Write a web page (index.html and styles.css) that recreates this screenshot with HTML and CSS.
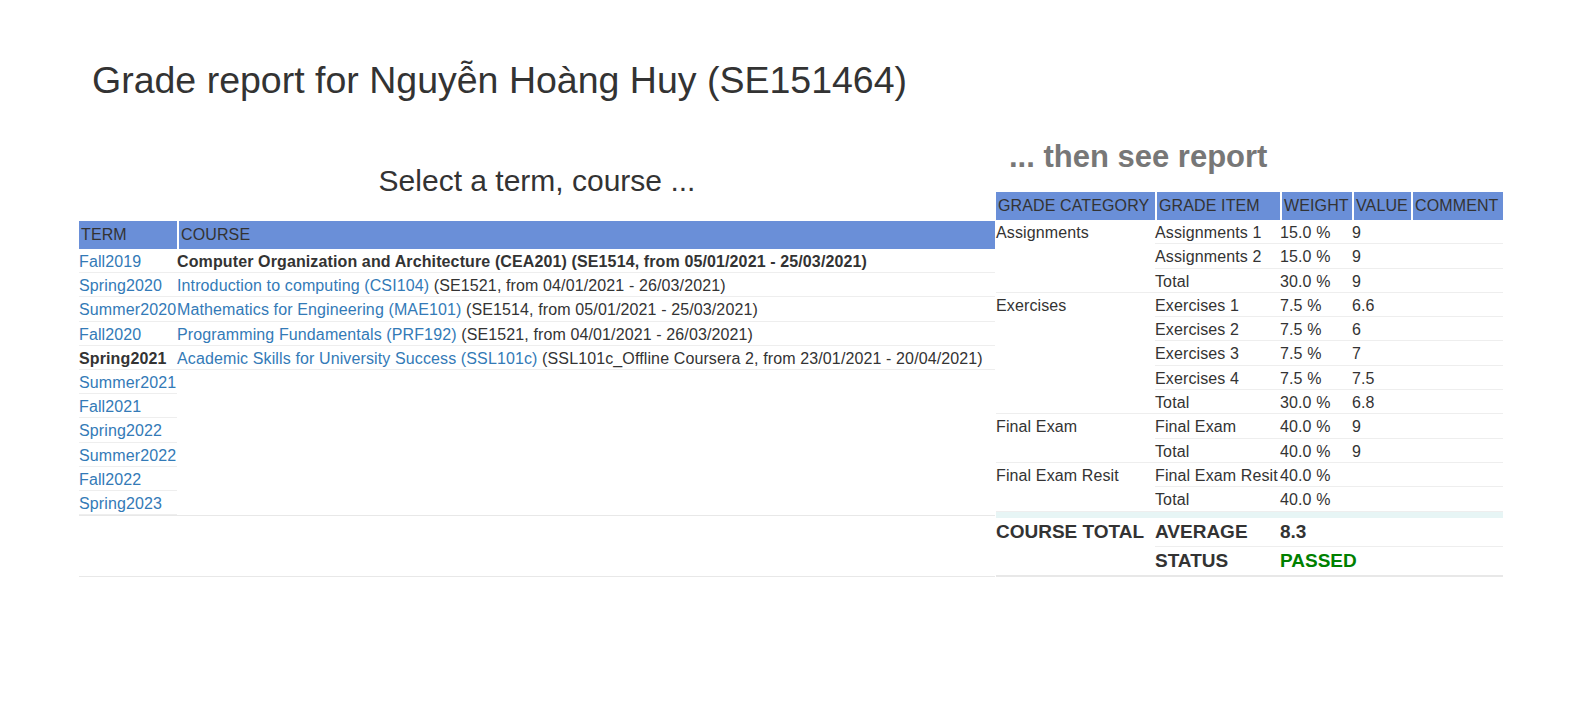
FILE: index.html
```html
<!DOCTYPE html>
<html lang="vi">
<head>
<meta charset="utf-8">
<title>Grade report</title>
<link rel="stylesheet" href="styles.css">
</head>
<body>
<div class="page">
  <h1 class="title">Grade report for Nguyễn Hoàng Huy (SE151464)</h1>
  <div class="panels">
    <section class="pick">
      <h2 class="pick-title">Select a term, course ...</h2>
      <table class="pick-table">
        <colgroup><col class="col-term"><col></colgroup>
        <thead>
          <tr><th>TERM</th><th>COURSE</th></tr>
        </thead>
        <tbody>
          <tr>
            <td class="cell-terms">
              <table class="list">
                <tr><td><a href="#">Fall2019</a></td></tr>
                <tr><td><a href="#">Spring2020</a></td></tr>
                <tr><td><a href="#">Summer2020</a></td></tr>
                <tr><td><a href="#">Fall2020</a></td></tr>
                <tr><td><b>Spring2021</b></td></tr>
                <tr><td><a href="#">Summer2021</a></td></tr>
                <tr><td><a href="#">Fall2021</a></td></tr>
                <tr><td><a href="#">Spring2022</a></td></tr>
                <tr><td><a href="#">Summer2022</a></td></tr>
                <tr><td><a href="#">Fall2022</a></td></tr>
                <tr><td><a href="#">Spring2023</a></td></tr>
              </table>
            </td>
            <td class="cell-courses">
              <table class="list">
                <tr><td><b>Computer Organization and Architecture (CEA201) (SE1514, from 05/01/2021 - 25/03/2021)</b></td></tr>
                <tr><td><a href="#">Introduction to computing (CSI104)</a> (SE1521, from 04/01/2021 - 26/03/2021)</td></tr>
                <tr><td><a href="#">Mathematics for Engineering (MAE101)</a> (SE1514, from 05/01/2021 - 25/03/2021)</td></tr>
                <tr><td><a href="#">Programming Fundamentals (PRF192)</a> (SE1521, from 04/01/2021 - 26/03/2021)</td></tr>
                <tr><td><a href="#">Academic Skills for University Success (SSL101c)</a> (SSL101c_Offline Coursera 2, from 23/01/2021 - 20/04/2021)</td></tr>
              </table>
            </td>
          </tr>
        </tbody>
      </table>
    </section>
    <section class="report">
      <h2 class="report-title">... then see report</h2>
      <table class="grades">
        <colgroup>
          <col class="g1"><col class="g2"><col class="g3"><col class="g4"><col class="g5">
        </colgroup>
        <thead>
          <tr><th>GRADE CATEGORY</th><th>GRADE ITEM</th><th>WEIGHT</th><th>VALUE</th><th>COMMENT</th></tr>
        </thead>
        <tbody>
          <tr><td class="cat" rowspan="3">Assignments</td><td>Assignments 1</td><td>15.0 %</td><td>9</td><td></td></tr>
          <tr><td>Assignments 2</td><td>15.0 %</td><td>9</td><td></td></tr>
          <tr><td>Total</td><td>30.0 %</td><td>9</td><td></td></tr>
          <tr><td class="cat" rowspan="5">Exercises</td><td>Exercises 1</td><td>7.5 %</td><td>6.6</td><td></td></tr>
          <tr><td>Exercises 2</td><td>7.5 %</td><td>6</td><td></td></tr>
          <tr><td>Exercises 3</td><td>7.5 %</td><td>7</td><td></td></tr>
          <tr><td>Exercises 4</td><td>7.5 %</td><td>7.5</td><td></td></tr>
          <tr><td>Total</td><td>30.0 %</td><td>6.8</td><td></td></tr>
          <tr><td class="cat" rowspan="2">Final Exam</td><td>Final Exam</td><td>40.0 %</td><td>9</td><td></td></tr>
          <tr><td>Total</td><td>40.0 %</td><td>9</td><td></td></tr>
          <tr><td class="cat" rowspan="2">Final Exam Resit</td><td>Final Exam Resit</td><td>40.0 %</td><td></td><td></td></tr>
          <tr><td>Total</td><td>40.0 %</td><td></td><td></td></tr>
        </tbody>
        <tfoot>
          <tr class="sep"><td colspan="5"></td></tr>
          <tr class="sum"><td class="cat" rowspan="2">COURSE TOTAL</td><td>AVERAGE</td><td>8.3</td><td></td><td></td></tr>
          <tr class="sum last"><td>STATUS</td><td class="passed">PASSED</td><td></td><td></td></tr>
        </tfoot>
      </table>
    </section>
  </div>
</div>
</body>
</html>
```

FILE: styles.css
```css
* { box-sizing: border-box; }
html, body { margin: 0; padding: 0; background: #fff; }
body {
  font-family: "Liberation Sans", Arial, Helvetica, sans-serif;
  font-size: 16px;
  color: #333;
}
a { color: #337ab7; text-decoration: none; }

.page { padding-left: 79px; }

.title {
  margin: 60px 0 0 13px;
  font-size: 37.5px;
  line-height: 41px;
  font-weight: normal;
  color: #333;
}

.panels { display: flex; align-items: stretch; }

.pick {
  width: 916px;
  margin-right: 1px;
  border-bottom: 1px solid #e8e8e8;
}
.report { width: 507px; }

.pick-title {
  margin: 63px 0 24px;
  font-size: 30px;
  line-height: 33px;
  font-weight: normal;
  text-align: center;
  color: #333;
}
.report-title {
  margin: 39px 0 19px;
  padding-left: 13px;
  font-size: 31px;
  line-height: 33px;
  font-weight: bold;
  color: #777;
}

table { border-collapse: separate; border-spacing: 0; table-layout: fixed; letter-spacing: 0.12px; }

.pick-table, .grades { width: 100%; }
.col-term { width: 98px; }

.pick-table th, .grades th {
  background: #6a8fd8;
  color: #333;
  font-weight: normal;
  text-align: left;
  height: 28px;
  line-height: 28px;
  padding: 0 0 0 2px;
  white-space: nowrap;
}
.pick-table th + th, .grades th + th { border-left: 2px solid #fff; }

.pick-table > tbody > tr > td {
  vertical-align: top;
  padding: 0;
  border-bottom: 1px solid #e8e8e8;
}

.list { width: 100%; table-layout: auto; }
.list td {
  padding: 2px 0 0;
  line-height: 21.2px;
  border-bottom: 1px solid #eee;
  white-space: nowrap;
}

.g1 { width: 159px; }
.g2 { width: 125px; }
.g3 { width: 72px; }
.g4 { width: 59px; }
.g5 { width: 92px; }

.grades td {
  padding: 2px 0 0;
  line-height: 21.3px;
  border-bottom: 1px solid #eee;
  vertical-align: top;
  white-space: nowrap;
}
.grades .sep td {
  height: 6px;
  line-height: 6px;
  padding: 0;
  background: #e7f5f5;
  border-bottom: 0;
}
.grades .sum td {
  font-size: 19px;
  font-weight: bold;
  line-height: 28px;
  padding: 0;
  letter-spacing: 0;
  vertical-align: middle;
}
.grades .sum td.cat { vertical-align: top; border-bottom: 2px solid #e8e8e8; }
.grades .sum.last td { border-bottom: 2px solid #e8e8e8; }
.grades .passed { color: #008000; }
```
